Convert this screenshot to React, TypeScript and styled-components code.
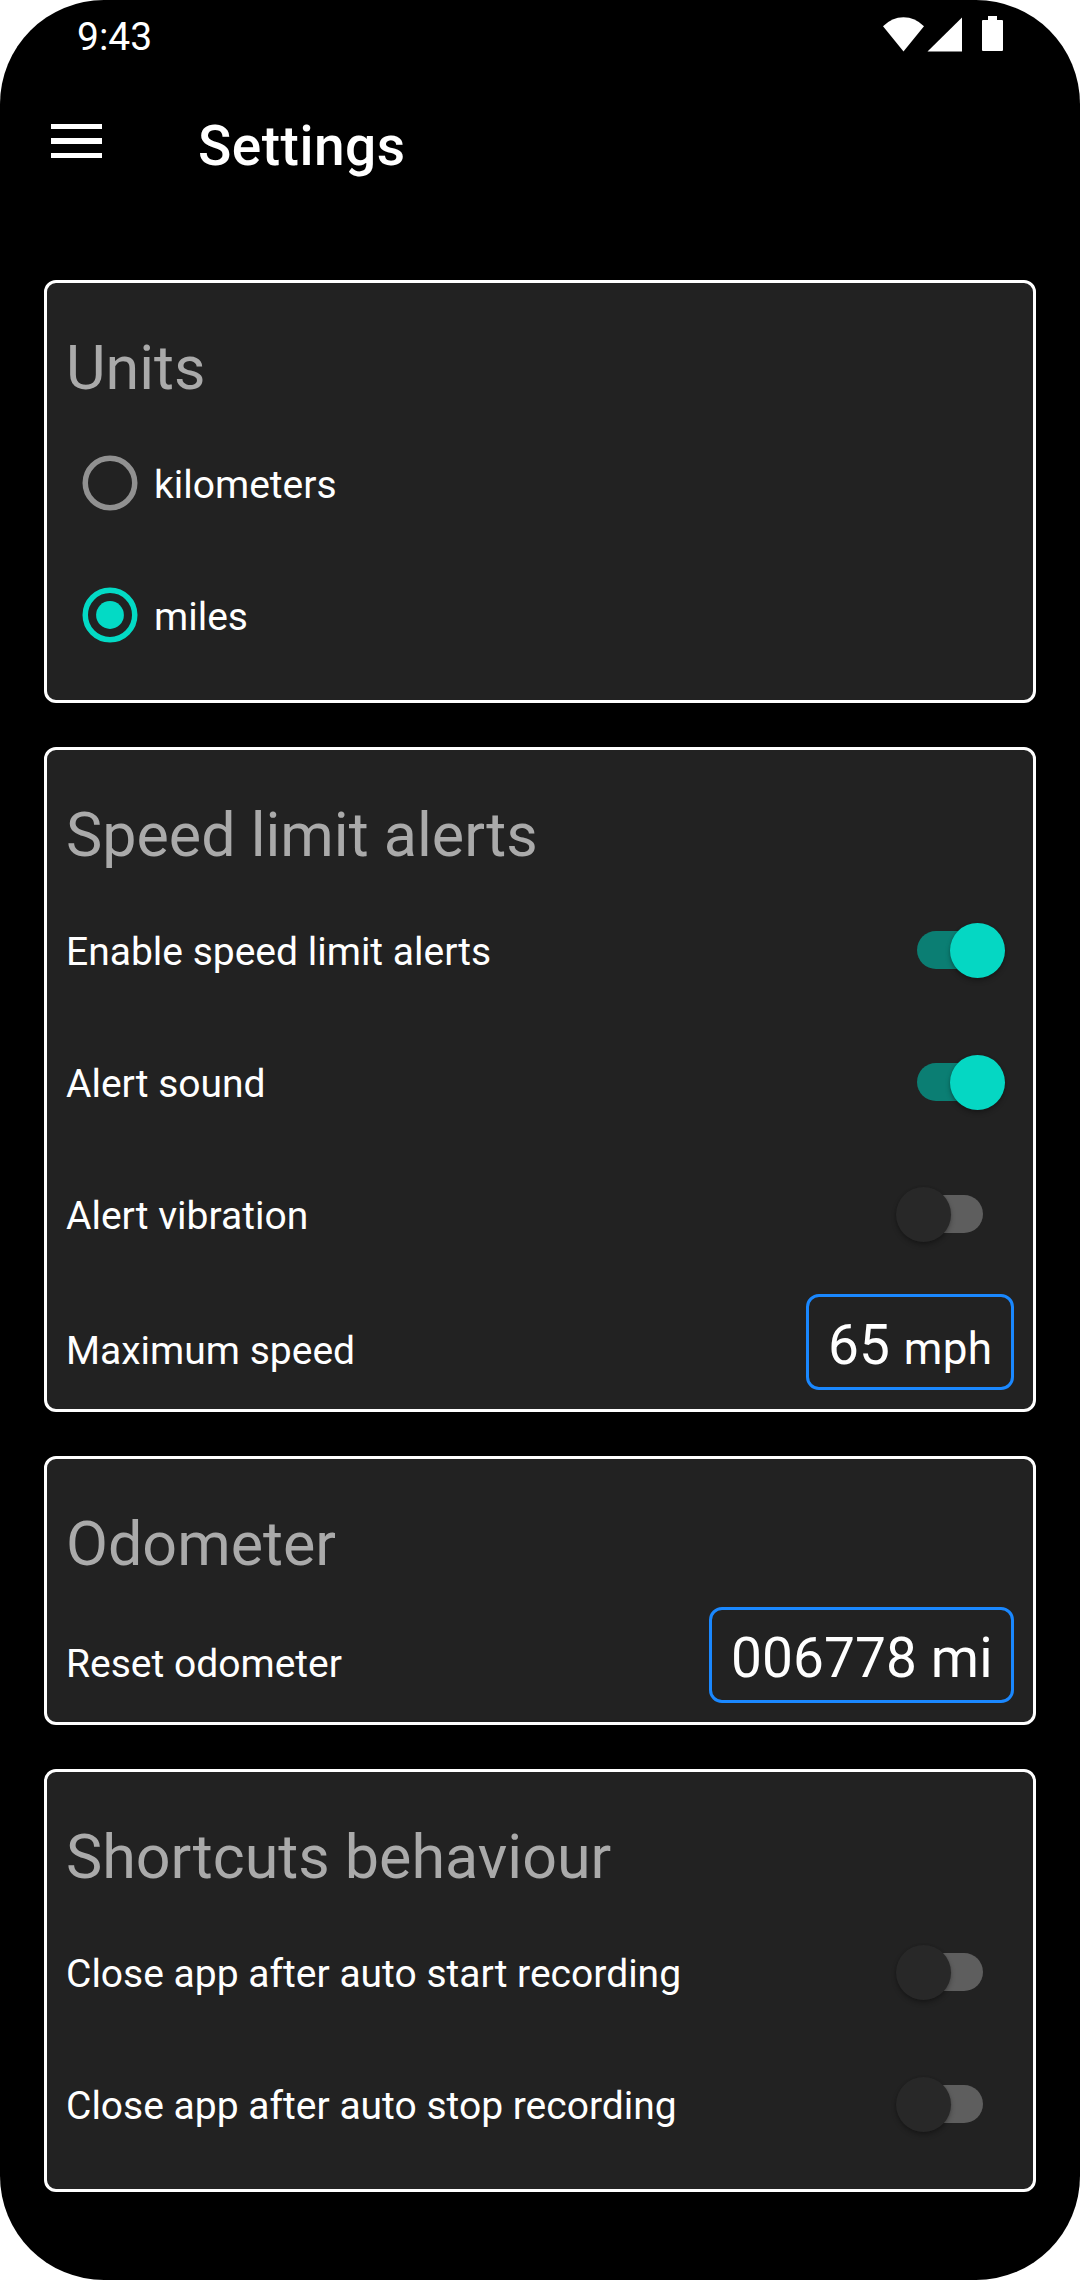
import React, { useState } from "react";
import styled, { createGlobalStyle } from "styled-components";

const GlobalStyle = createGlobalStyle`
  body { margin: 0; background: #fff; }
  * { box-sizing: border-box; }
`;

const Screen = styled.div`
  display: flex;
  flex-direction: column;
  width: 1080px;
  height: 2280px;
  border-radius: 104px;
  overflow: hidden;
  background: #000;
  color: #fff;
  font-family: Roboto, "Liberation Sans", sans-serif;
`;

const StatusBar = styled.div`
  display: flex;
  justify-content: space-between;
  height: 66px;
  padding: 0 77px 0 77px;
`;

const Clock = styled.span`
  font-size: 39px;
  line-height: 74px;
`;

const StatusIcons = styled.svg`
  display: block;
  width: 121px;
  height: 66px;
`;

const AppBar = styled.header`
  display: flex;
  align-items: flex-start;
  height: 214px;
  padding-left: 51px;
`;

const MenuButton = styled.button`
  width: 51px;
  height: 34px;
  margin: 58px 96px 0 0;
  padding: 0;
  border: 0;
  background: none;
`;

const MenuIcon = styled.svg`
  display: block;
`;

const PageTitle = styled.h1`
  margin: 0;
  padding-top: 48px;
  font-size: 55px;
  font-weight: 500;
  line-height: 64px;
  letter-spacing: 0.5px;
`;

const Sections = styled.main`
  display: flex;
  flex-direction: column;
  gap: 44px;
  padding: 0 44px;
`;

const Card = styled.section`
  padding: 19px;
  border: 3px solid #fff;
  border-radius: 12px;
  background: #222;
`;

const CardTitle = styled.h2`
  height: 115px;
  margin: 0;
  padding-top: 18px;
  color: #aaa;
  font-size: 61px;
  font-weight: 400;
  line-height: 97px;
`;

const Row = styled.div`
  display: flex;
  align-items: center;
  justify-content: space-between;
  height: 132px;
`;

const RadioRow = styled(Row)`
  justify-content: flex-start;
  gap: 16px;
  padding-left: 16px;
`;

const ValueRow = styled(Row)`
  align-items: baseline;
  height: 110px;
  padding-top: 14px;
`;

const Label = styled.span`
  padding-top: 4px;
  font-size: 39px;
  line-height: 46px;
  white-space: nowrap;
`;

const RadioMark = styled.svg<{ $on: boolean }>`
  display: block;
  width: 56px;
  height: 56px;
  color: ${(p) => (p.$on ? "#03dac5" : "#919191")};
`;

const SwitchTrack = styled.span<{ $on: boolean }>`
  display: flex;
  align-items: center;
  justify-content: ${(p) => (p.$on ? "flex-end" : "flex-start")};
  width: 66px;
  height: 38px;
  margin-right: 31px;
  border-radius: 19px;
  background: ${(p) => (p.$on ? "#0b7e73" : "#5e5e5e")};
`;

const SwitchThumb = styled.span<{ $on: boolean }>`
  flex: none;
  width: 55px;
  height: 55px;
  margin: 0 -21.5px;
  border-radius: 50%;
  background: ${(p) => (p.$on ? "#05d7c3" : "#282828")};
  box-shadow: 0 3px 5px rgba(0, 0, 0, 0.28), 0 0 2px rgba(0, 0, 0, 0.15);
`;

const ValueBox = styled.button<{ $width: number }>`
  width: ${(p) => p.$width}px;
  height: 96px;
  padding: 6px 0 0 19px;
  border: 3px solid #1a88ff;
  border-radius: 13px;
  background: none;
  color: #fff;
  font: 400 55px/84px Roboto, "Liberation Sans", sans-serif;
  letter-spacing: 0.1px;
  text-align: left;
  white-space: nowrap;
`;

const Unit = styled.span`
  font-size: 44px;
  letter-spacing: 0.4px;
`;

function Switch({ label, initial }: { label: string; initial: boolean }) {
  const [on, setOn] = useState(initial);
  return (
    <Row role="switch" aria-checked={on} onClick={() => setOn(!on)}>
      <Label>{label}</Label>
      <SwitchTrack $on={on}>
        <SwitchThumb $on={on} />
      </SwitchTrack>
    </Row>
  );
}

export default function App() {
  const [unit, setUnit] = useState("miles");
  return (
    <>
      <GlobalStyle />
      <Screen>
        <StatusBar>
          <Clock>9:43</Clock>
          <StatusIcons viewBox="882 0 121 66" fill="#fff">
            <path d="M903.5 51.5 883 26.3Q892 17.3 903.5 17.3T924 26.3Z" />
            <path d="M962 17.5V51.6H927.5Z" />
            <path d="M988 16h9v4h5q1 0 1 1v29q0 1-1 1h-19q-1 0-1-1V21q0-1 1-1h5z" />
          </StatusIcons>
        </StatusBar>
        <AppBar>
          <MenuButton aria-label="Menu">
            <MenuIcon width="51" height="34" fill="#fff">
              <rect width="51" height="5" />
              <rect y="14" width="51" height="6" />
              <rect y="29" width="51" height="5" />
            </MenuIcon>
          </MenuButton>
          <PageTitle>Settings</PageTitle>
        </AppBar>
        <Sections>
          <Card>
            <CardTitle>Units</CardTitle>
            {["kilometers", "miles"].map((name) => (
              <RadioRow
                key={name}
                role="radio"
                aria-checked={unit === name}
                onClick={() => setUnit(name)}
              >
                <RadioMark $on={unit === name} viewBox="0 0 56 56">
                  <circle cx="28" cy="28" r="24.75" fill="none" stroke="currentColor" strokeWidth="5.5" />
                  {unit === name && <circle cx="28" cy="28" r="13.9" fill="currentColor" />}
                </RadioMark>
                <Label>{name}</Label>
              </RadioRow>
            ))}
          </Card>
          <Card>
            <CardTitle>Speed limit alerts</CardTitle>
            <Switch label="Enable speed limit alerts" initial />
            <Switch label="Alert sound" initial />
            <Switch label="Alert vibration" initial={false} />
            <ValueRow>
              <Label>Maximum speed</Label>
              <ValueBox $width={208}>
                65 <Unit>mph</Unit>
              </ValueBox>
            </ValueRow>
          </Card>
          <Card>
            <CardTitle>Odometer</CardTitle>
            <ValueRow>
              <Label>Reset odometer</Label>
              <ValueBox $width={305}>006778 mi</ValueBox>
            </ValueRow>
          </Card>
          <Card>
            <CardTitle>Shortcuts behaviour</CardTitle>
            <Switch label="Close app after auto start recording" initial={false} />
            <Switch label="Close app after auto stop recording" initial={false} />
          </Card>
        </Sections>
      </Screen>
    </>
  );
}
